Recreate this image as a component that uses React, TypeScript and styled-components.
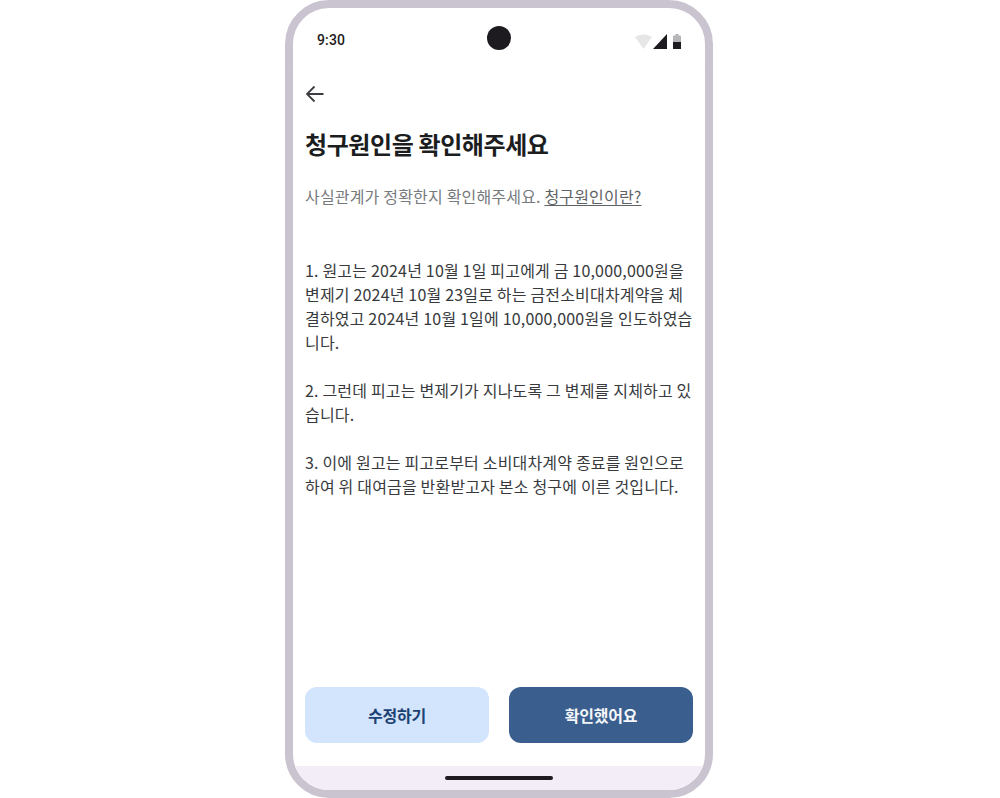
import React from "react";
import styled, { createGlobalStyle } from "styled-components";

const Global = createGlobalStyle`
  html, body { margin: 0; padding: 0; background: #fff; }
  body { font-family: "Noto Sans CJK KR", "Noto Sans", sans-serif; }
`;

const Page = styled.div`
  width: 1000px;
  height: 798px;
  display: flex;
  justify-content: center;
`;

const Phone = styled.div`
  box-sizing: border-box;
  width: 428px;
  height: 798px;
  margin-left: -2px;
  border: 8px solid #cac4d0;
  border-radius: 44px;
  background: #fff;
  display: flex;
  flex-direction: column;
  overflow: hidden;
`;

const StatusBar = styled.div`
  position: relative;
  box-sizing: border-box;
  flex: none;
  height: 63px;
  padding: 0 24px;
  border-bottom: 1px solid #fefef8;
  display: flex;
  align-items: center;
  justify-content: space-between;
`;

const Time = styled.span`
  font-family: Roboto, sans-serif;
  font-size: 14px;
  font-weight: 500;
  letter-spacing: 0.14px;
  color: #1d1b20;
  margin-top: 1px;
`;

const Camera = styled.div`
  position: absolute;
  left: 194px;
  top: 18px;
  width: 24px;
  height: 24px;
  border-radius: 50%;
  background: #1d1b20;
`;

const StatusIcons = styled.svg`
  display: block;
  margin-top: 4px;
`;

const Main = styled.div`
  flex: 1;
  display: flex;
  flex-direction: column;
  padding: 0 12px;
  min-height: 0;
`;

const BackButton = styled.button`
  align-self: flex-start;
  border: 0;
  background: none;
  padding: 0;
  margin: 11px 0 0 -2px;
  width: 24px;
  height: 24px;
  color: #3c3c43;
`;

const Title = styled.h1`
  margin: 20px 0 0;
  font-size: 24px;
  line-height: 36px;
  font-weight: 700;
  letter-spacing: -0.4px;
  color: #1b1d1f;
`;

const Sub = styled.p`
  margin: 22px 0 0;
  font-size: 16px;
  line-height: 24px;
  font-weight: 400;
  letter-spacing: 0.18px;
  color: #777a7d;
`;

const SubLink = styled.a`
  color: #5f6265;
  text-decoration: underline;
  text-underline-offset: 2px;
`;

const Body = styled.p`
  margin: 50px -1px 0 0;
  font-size: 16px;
  line-height: 24px;
  font-weight: 400;
  letter-spacing: 0.18px;
  color: #383a3d;
  white-space: pre-wrap;
  word-break: break-all;
`;

const Actions = styled.div`
  margin-top: auto;
  margin-bottom: 23px;
  display: grid;
  grid-template-columns: 1fr 1fr;
  gap: 20px;
`;

const ActionButton = styled.button<{ $primary?: boolean }>`
  height: 56px;
  border: 0;
  border-radius: 12px;
  font-family: inherit;
  font-size: 16px;
  font-weight: 700;
  letter-spacing: -0.2px;
  background: ${(p) => (p.$primary ? "#3a5f8f" : "#d3e4fd")};
  color: ${(p) => (p.$primary ? "#f4f6f9" : "#1b4272")};
`;

const NavBar = styled.div`
  flex: none;
  height: 24px;
  background: #f3edf7;
  display: flex;
  align-items: center;
  justify-content: center;
`;

const Handle = styled.div`
  width: 108px;
  height: 4px;
  border-radius: 2px;
  background: #1d1b20;
`;

const bodyText = `1. 원고는 2024년 10월 1일 피고에게 금 10,000,000원을 변제기 2024년 10월 23일로 하는 금전소비대차계약을 체결하였고 2024년 10월 1일에 10,000,000원을 인도하였습니다.

2. 그런데 피고는 변제기가 지나도록 그 변제를 지체하고 있습니다.

3. 이에 원고는 피고로부터 소비대차계약 종료를 원인으로 하여 위 대여금을 반환받고자 본소 청구에 이른 것입니다.`;

export default function App() {
  return (
    <Page>
      <Global />
      <Phone>
        <StatusBar>
          <Time>9:30</Time>
          <Camera />
          <StatusIcons width="46" height="16" viewBox="0 0 46 16">
            <path d="M0 4 C5 0.500 12 0.500 17 4 L8.500 16 Z" fill="#e6e6e6" />
            <path d="M18 16 L32 1 V16 Z" fill="#1d1b20" />
            <rect x="38" y="2.500" width="8" height="13.500" rx="1" fill="#b5b4b6" />
            <rect x="40.500" y="1" width="3" height="2" fill="#b5b4b6" />
            <rect x="38" y="9" width="8" height="7" fill="#1d1b20" />
          </StatusIcons>
        </StatusBar>
        <Main>
          <BackButton aria-label="뒤로">
            <svg width="24" height="24" viewBox="0 0 24 24" fill="none" stroke="currentColor" strokeWidth="1.800">
              <path d="M20.500 12H4.500M11.500 4.500 4 12l7.500 7.500" />
            </svg>
          </BackButton>
          <Title>청구원인을 확인해주세요</Title>
          <Sub>
            사실관계가 정확한지 확인해주세요. <SubLink>청구원인이란?</SubLink>
          </Sub>
          <Body>{bodyText}</Body>
          <Actions>
            <ActionButton>수정하기</ActionButton>
            <ActionButton $primary>확인했어요</ActionButton>
          </Actions>
        </Main>
        <NavBar>
          <Handle />
        </NavBar>
      </Phone>
    </Page>
  );
}
